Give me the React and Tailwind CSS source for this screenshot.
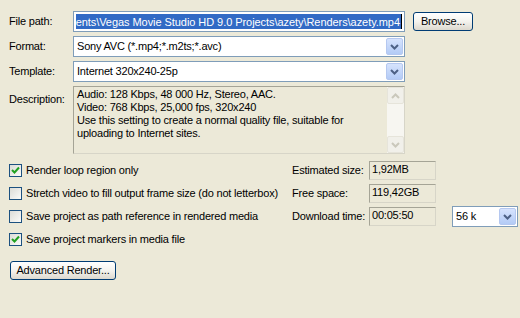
import React from "react";

function DropBtn() {
  return (
    <div className="w-[17px] h-[17px] rounded-[2px] border border-[#B5C8F0] bg-gradient-to-b from-[#D6E3FD] to-[#B3CBF6] flex items-center justify-center">
      <svg width="9" height="6" viewBox="0 0 9 6">
        <path d="M1 1 L4.5 4.5 L8 1" stroke="#4D6185" strokeWidth="2" fill="none" />
      </svg>
    </div>
  );
}

function Select({ text, w }) {
  return (
    <div className={`${w} h-[21px] border border-[#7F9DB9] bg-white flex items-center justify-between pl-[3px] pr-[1px]`}>
      <span className="whitespace-nowrap">{text}</span>
      <DropBtn />
    </div>
  );
}

function Check({ checked }) {
  return (
    <div className="w-[13px] h-[13px] border border-[#1C5180] bg-gradient-to-br from-[#DCDCD7] to-[#FBFBF9] flex items-center justify-center">
      {checked && (
        <svg width="9" height="9" viewBox="0 0 9 9">
          <path d="M1 4 L3.5 6.5 L8 1.5" stroke="#21A121" strokeWidth="2" fill="none" />
        </svg>
      )}
    </div>
  );
}

function XpButton({ w, children }) {
  return (
    <div className={`${w} h-[19px] rounded-[3px] border border-[#003C74] bg-gradient-to-b from-[#FFFFFF] via-[#F4F3EE] to-[#DCD8CE] flex items-center justify-center`}>
      {children}
    </div>
  );
}

function ScrollArrow({ up }) {
  return (
    <div className="w-[17px] h-[17px] rounded-[2px] border border-[#E6E4DA] bg-[#F1F0EA] flex items-center justify-center">
      <svg width="9" height="6" viewBox="0 0 9 6">
        <path d={up ? "M1 5 L4.5 1.5 L8 5" : "M1 1 L4.5 4.5 L8 1"} stroke="#CAC8BB" strokeWidth="2" fill="none" />
      </svg>
    </div>
  );
}

function ReadBox({ text }) {
  return (
    <div className="w-[67px] h-[19px] border border-[#A5A496] border-r-[#D7D5C8] border-b-[#D7D5C8] pl-[2px] flex items-start leading-[15px]">
      {text}
    </div>
  );
}

export default function App() {
  return (
    <div className="w-[520px] h-[318px] bg-[#ECE9D8] font-['Liberation_Sans',Arial,sans-serif] text-[11px] tracking-[-0.2px] text-black pt-[11px] pl-[9px] overflow-hidden">
      <div className="flex items-center h-[21px]">
        <div className="w-[64px]">File path:</div>
        <div className="w-[332px] h-[21px] border border-[#7F9DB9] bg-white p-[2px] flex">
          <div className="flex-1 overflow-hidden flex justify-end bg-[#316AC5] text-white whitespace-nowrap pr-[1px] border-r border-black tracking-[-0.06px]">
            <span>ents\Vegas Movie Studio HD 9.0 Projects\azety\Renders\azety.mp4</span>
          </div>
        </div>
        <div className="ml-[8px]">
          <XpButton w="w-[60px]">Browse...</XpButton>
        </div>
      </div>
      <div className="flex items-center h-[21px] mt-[4px]">
        <div className="w-[64px]">Format:</div>
        <Select w="w-[332px]" text="Sony AVC (*.mp4;*.m2ts;*.avc)" />
      </div>
      <div className="flex items-center h-[21px] mt-[4px]">
        <div className="w-[64px]">Template:</div>
        <Select w="w-[332px]" text="Internet 320x240-25p" />
      </div>
      <div className="flex mt-[4px]">
        <div className="w-[64px] pt-[5px]">Description:</div>
        <div className="w-[332px] h-[68px] border border-[#A5A496] border-r-[#D7D5C8] border-b-[#D7D5C8] flex">
          <div className="flex-1 pl-[3px] pt-[1px] leading-[13px]">
            <div>Audio: 128 Kbps, 48 000 Hz, Stereo, AAC.</div>
            <div>Video: 768 Kbps, 25,000 fps, 320x240</div>
            <div>Use this setting to create a normal quality file, suitable for</div>
            <div>uploading to Internet sites.</div>
          </div>
          <div className="w-[17px] bg-[#F7F6F1] flex flex-col justify-between">
            <ScrollArrow up />
            <ScrollArrow />
          </div>
        </div>
      </div>

      <div className="flex mt-[5px]">
        <div className="w-[283px] flex flex-col">
          {[
            ["Render loop region only", true],
            ["Stretch video to fill output frame size (do not letterbox)", false],
            ["Save project as path reference in rendered media", false],
            ["Save project markers in media file", true],
          ].map(([t, c]) => (
            <div key={t} className="h-[23px] flex items-center">
              <Check checked={c} />
              <span className="ml-[4px] whitespace-nowrap">{t}</span>
            </div>
          ))}
        </div>
        <div className="flex flex-col">
          <div className="h-[23px] flex items-center">
            <div className="w-[77px]">Estimated size:</div>
            <ReadBox text="1,92MB" />
          </div>
          <div className="h-[23px] flex items-center">
            <div className="w-[77px]">Free space:</div>
            <ReadBox text="119,42GB" />
          </div>
          <div className="h-[23px] flex items-center">
            <div className="w-[77px]">Download time:</div>
            <ReadBox text="00:05:50" />
            <div className="ml-[16px]">
              <Select w="w-[66px]" text="56 k" />
            </div>
          </div>
        </div>
      </div>

      <div className="mt-[10px] ml-[1px]">
        <XpButton w="w-[106px]">Advanced Render...</XpButton>
      </div>
    </div>
  );
}
